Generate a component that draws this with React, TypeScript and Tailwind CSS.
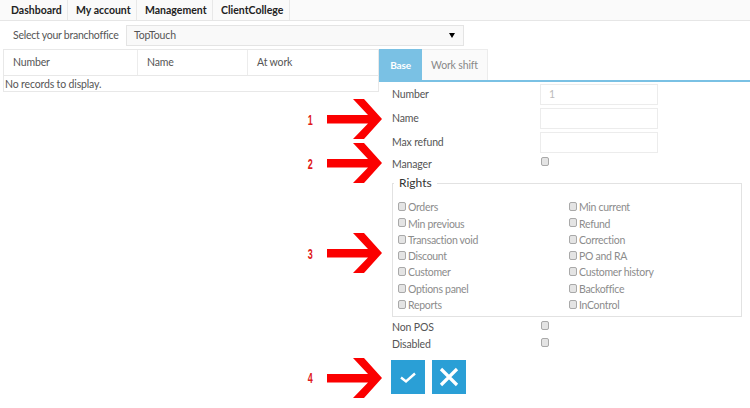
import React from "react";

const left = ["Orders", "Min previous", "Transaction void", "Discount", "Customer", "Options panel", "Reports"];
const right = ["Min current", "Refund", "Correction", "PO and RA", "Customer history", "Backoffice", "InControl"];

function Box({ className = "" }: { className?: string }) {
  return <span className={"block w-[8px] h-[9px] rounded-[2px] border border-[#a9a9a9] bg-[#e4e4e4] shrink-0 " + className} />;
}

function Arrow({ className, n, nClass }: { className: string; n: string; nClass: string }) {
  return (
    <>
      <span className={"absolute text-[15px] leading-none font-bold text-[#e01b1b] scale-x-[0.6] " + nClass} style={{ fontFamily: '"Liberation Sans", sans-serif' }}>{n}</span>
      <svg className={"absolute " + className} width="55" height="40" viewBox="0 0 55 40">
        <path d="M0 16H41L26 0H37L55 20L37 40H26L41 24.5H0Z" fill="#fb0000" />
      </svg>
    </>
  );
}

function Row({ label, value, disabled }: { label: string; value?: string; disabled?: boolean }) {
  return (
    <div className="flex items-center h-[21px] mb-[3px]">
      <span className="w-[148px] text-[#555]">{label}</span>
      <div className={"w-[118px] h-[21px] border border-[#ececec] pl-2 leading-[19px] text-[#bbb]"}>{disabled ? value : ""}</div>
    </div>
  );
}

export default function App() {
  return (
    <div className="relative w-[750px] h-[408px] overflow-hidden bg-white text-[10.5px] tracking-[-0.15px] text-[#555]" style={{ fontFamily: 'Lato, "Noto Sans", sans-serif' }}>
      <nav className="flex h-[21px] border-b border-[#e6e6e6] bg-[#fafafa] pl-[3px] font-bold text-[#222] text-[10.5px] tracking-normal">
        <a className="w-[65px] border-r border-[#e8e8e8] pl-2 leading-[20px]">Dashboard</a>
        <a className="w-[69px] border-r border-[#e8e8e8] pl-2 leading-[20px]">My account</a>
        <a className="w-[76px] border-r border-[#e8e8e8] pl-2 leading-[20px]">Management</a>
        <a className="w-[77px] border-r border-[#e8e8e8] pl-2 leading-[20px]">ClientCollege</a>
      </nav>

      <div className="flex items-center mt-[4px] h-[21px] pl-[13px]">
        <span className="w-[113px] whitespace-nowrap tracking-[-0.25px]">Select your branchoffice</span>
        <div className="flex items-center justify-between w-[338px] h-[21px] border border-[#e4e4e4] bg-[#f9f9f9] pl-[7px] pr-[8px]">
          <span>TopTouch</span>
          <span className="w-0 h-0 border-x-[3.5px] border-x-transparent border-t-[5px] border-t-black" />
        </div>
      </div>

      <div className="flex mt-[3px] pl-[3px]">
        <div className="w-[376px] shrink-0">
          <div className="h-[43px] border border-[#e8e8e8]">
            <div className="flex h-[26px] border-b border-[#e8e8e8] leading-[25px]">
              <div className="w-[134px] border-r border-[#ececec] pl-[9px]">Number</div>
              <div className="w-[110px] border-r border-[#ececec] pl-[9px]">Name</div>
              <div className="pl-[9px]">At work</div>
            </div>
            <div className="pl-px leading-[16px]">No records to display.</div>
          </div>
        </div>

        <div className="flex-1">
          <div className="flex h-[33px] border-b-2 border-[#7ac1e4]">
            <div className="w-[43px] bg-[#7ac1e4] text-white text-center leading-[33px] font-bold text-[10px]">Base</div>
            <div className="w-[66px] border-t border-r border-[#ececec] bg-[#fafafa] text-center leading-[31px] text-[#888]">Work shift</div>
          </div>

          <div className="pl-[13px] pt-[2px]">
            <Row label="Number" value="1" disabled />
            <Row label="Name" />
            <Row label="Max refund" />
            <div className="flex items-center h-[17px]">
              <span className="w-[148px]">Manager</span>
              <Box className="ml-px -mt-[6px]" />
            </div>

            <fieldset className="w-[350px] h-[141px] mt-[3px] border border-[#e2e2e2] pl-[5px] pr-2 box-border">
              <legend className="-ml-[4px] px-[5px] text-[#333] text-[12px] leading-[14px] tracking-normal">Rights</legend>
              <div className="grid grid-cols-[171px_1fr] text-[#8c8c8c] pt-[10px] tracking-[-0.3px]">
                {[left, right].map((col, i) => (
                  <div key={i}>
                    {col.map((t) => (
                      <div key={t} className="flex items-center h-[16.3px]">
                        <Box className="-mt-[3px]" />
                        <span className="ml-[2px]">{t}</span>
                      </div>
                    ))}
                  </div>
                ))}
              </div>
            </fieldset>

            <div className="flex items-center h-[17px] mt-[2px]">
              <span className="w-[148px]">Non POS</span>
              <Box className="ml-px -mt-[5px]" />
            </div>
            <div className="flex items-center h-[17px]">
              <span className="w-[148px]">Disabled</span>
              <Box className="ml-px -mt-[5px]" />
            </div>

            <div className="flex gap-[7px] mt-[7px] -ml-px">
              <button className="flex items-center justify-center w-[34px] h-[34px] bg-[#2a9fd6]">
                <svg width="18" height="14" viewBox="0 0 18 14"><path d="M2 7.5L7 11.5L16 3.5" fill="none" stroke="#fff" strokeWidth="2.4" /></svg>
              </button>
              <button className="flex items-center justify-center w-[34px] h-[34px] bg-[#2a9fd6]">
                <svg width="20" height="20" viewBox="0 0 20 20"><path d="M2 2L18 18M18 2L2 18" fill="none" stroke="#fff" strokeWidth="3.2" /></svg>
              </button>
            </div>
          </div>
        </div>
      </div>

      <Arrow className="left-[327px] top-[99px]" n="1" nClass="left-[306px] top-[112px]" />
      <Arrow className="left-[327px] top-[143px]" n="2" nClass="left-[306px] top-[156px]" />
      <Arrow className="left-[327px] top-[233px]" n="3" nClass="left-[306px] top-[246px]" />
      <Arrow className="left-[327px] top-[358px]" n="4" nClass="left-[306px] top-[370px]" />
    </div>
  );
}
